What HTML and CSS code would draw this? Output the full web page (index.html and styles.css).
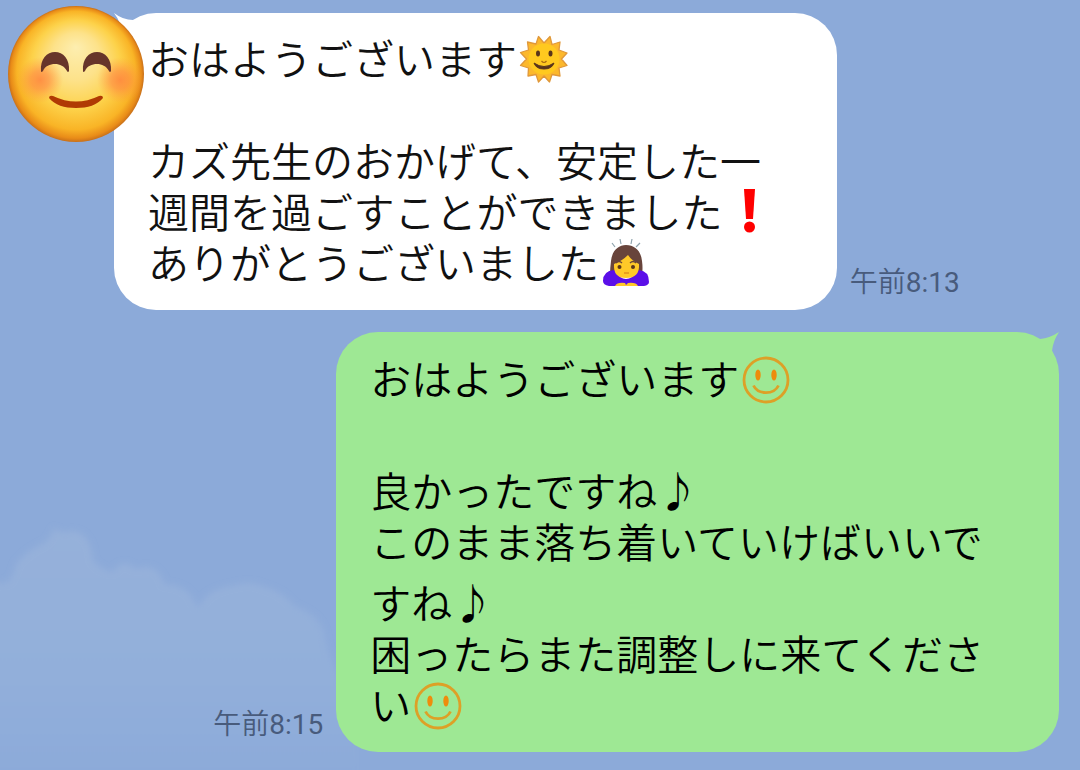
FILE: index.html
```html
<!DOCTYPE html>
<html lang="ja">
<head>
<meta charset="utf-8">
<meta name="viewport" content="width=device-width, initial-scale=1">
<title>トーク</title>
<link rel="stylesheet" href="styles.css">
</head>
<body>
<svg class="clouds" viewBox="0 0 360 250" aria-hidden="true">
  <defs>
    <linearGradient id="haze" x1="0" y1="0" x2="0" y2="1">
      <stop offset="0" stop-color="#96b1da"/>
      <stop offset="0.6" stop-color="#92afda"/>
      <stop offset="1" stop-color="#8caad9"/>
    </linearGradient>
    <filter id="soft" x="-5%" y="-5%" width="110%" height="110%"><feGaussianBlur stdDeviation="3"/></filter>
  </defs>
  <path filter="url(#soft)" fill="url(#haze)" d="M-20 64 L8 62 Q14 54 16 44 Q26 32 38 26 Q50 22 54 8 Q60 14 72 11 Q86 12 91 28 L93 40 Q98 48 112 52 L118 46 Q126 40 134 48 L150 47 Q162 52 164 64 Q180 64 190 74 L198 88 Q206 70 230 66 Q250 60 262 66 Q284 72 294 86 Q318 94 324 112 Q330 150 360 190 V260 H-20Z"/>
</svg>
<main class="chat">
  <article class="message message--received">
    <svg class="avatar" viewBox="0 0 136 136" role="img" aria-label="プロフィール画像">
      <defs>
        <radialGradient id="face" cx="0.5" cy="0.5" r="0.5" fx="0.5" fy="0.3">
          <stop offset="0" stop-color="#fdeeb0"/>
          <stop offset="0.35" stop-color="#fde28a"/>
          <stop offset="0.65" stop-color="#fdd24a"/>
          <stop offset="0.87" stop-color="#f9b426"/>
          <stop offset="0.96" stop-color="#e98c18"/>
          <stop offset="1" stop-color="#c8701a"/>
        </radialGradient>
        <radialGradient id="blush">
          <stop offset="0" stop-color="#ff7f3f" stop-opacity="0.8"/>
          <stop offset="0.4" stop-color="#ff8442" stop-opacity="0.6"/>
          <stop offset="1" stop-color="#ff9a40" stop-opacity="0"/>
        </radialGradient>
      </defs>
      <circle cx="68" cy="68" r="68" fill="url(#face)"/>
      <circle cx="32" cy="74" r="23" fill="url(#blush)"/>
      <circle cx="112" cy="74" r="23" fill="url(#blush)"/>
      <path fill="#67352a" d="M33 65C32 53 39 46 47 46C55 46 62 53 61 65Q60 67 59 65C56 60 52 58 47 58C42 58 37 60 35 65Q33 67 33 65Z"/>
      <path fill="#67352a" d="M75 65C74 53 81 46 89 46C97 46 104 53 103 65Q102 67 101 65C98 60 94 58 89 58C84 58 79 60 77 65Q75 67 75 65Z"/>
      <path fill="#b03a04" d="M41 92Q41 89 45 90Q68 101 91 90Q95 89 95 92C89 99 80 102 68 102C56 102 47 99 41 92Z"/>
    </svg>
    <div class="bubble bubble--white">
      <svg class="tail tail--left" viewBox="0 0 22 22" aria-hidden="true"><path d="M0 0Q9 7 19 7L19 19H7Q7 9 0 0Z"/></svg>
      <p class="line">おはようございます<svg class="emoji" viewBox="0 0 50 50" role="img" aria-label="太陽"><path fill="#fcb82c" stroke="#e0983a" stroke-width="1.3" stroke-linejoin="round" d="M19.500 1.500 25 8 31 1.500 33 9.500 41 7 40 15 48 18 42.500 24 48 30.500 40 33 41 41 33 39.500 30.500 47 25 41 19.500 47 17 39.500 9 41 9.500 33 1.500 30.500 7.500 24 1.500 17.500 9.500 15 8.500 7 17 9Z"/><circle cx="25" cy="24" r="15.500" fill="#ffc91f"/><ellipse cx="19" cy="18.500" rx="2" ry="3" fill="#59351b"/><ellipse cx="31.500" cy="18.500" rx="2" ry="3" fill="#59351b"/><path d="M22.500 26Q25 29 27.500 26" fill="none" stroke="#a96813" stroke-width="1.200"/><path d="M15 28Q25 35 35 28Q33 34 25 34Q17 34 15 28Z" fill="#59351b" stroke="#59351b"/></svg></p>
      <p class="line"><br></p>
      <p class="line">カズ先生のおかげて、安定した一</p>
      <p class="line">週間を過ごすことができました<svg class="emoji" viewBox="0 0 50 50" role="img" aria-label="びっくりマーク"><path fill="#f00" d="M20 1H31L29 31H22Z"/><circle cx="25.500" cy="39" r="5.500" fill="#f00"/></svg></p>
      <p class="line">ありがとうございました<svg class="emoji" viewBox="0 0 50 50" role="img" aria-label="おじぎ"><path fill="none" stroke="#8fa3ad" stroke-width="1.2" d="M11 4 14 8M19 0 20 5M31 0 30 5M39 4 35 8"/><path fill="#68443b" d="M9 37Q9 29 10 22C11 12 17 6 25 6C34 6 40 12 41 22Q42 29 41 37Z"/><path fill="#5b0fe8" d="M2 42Q2 32 13 31Q19 40 25 40Q31 40 38 31Q48 32 48 43Q48 46 43 47H8Q2 46 2 42Z"/><path fill="#ffc928" d="M13 25Q21 22 27 16Q31 22 38 25Q39 39 25 39Q12 39 13 25Z"/><path fill="none" stroke="#68443b" stroke-width="1.3" d="M15 24Q18 21 21 24M29 24Q32 21 35 24"/><circle cx="18.500" cy="28" r="2" fill="#59351b"/><circle cx="32" cy="28" r="2" fill="#59351b"/><path d="M23 34H28" stroke="#e0921c" stroke-width="1.500"/><path fill="#ffc928" d="M14 47Q16 43 24 44L25 46 27 44Q35 43 37 47Z"/></svg></p>
    </div>
    <time class="time" datetime="08:13">午前<span class="digits">8:13</span></time>
  </article>
  <article class="message message--sent">
    <time class="time" datetime="08:15">午前<span class="digits">8:15</span></time>
    <div class="bubble bubble--green">
      <svg class="tail tail--right" viewBox="0 0 22 22" aria-hidden="true"><path d="M22 0Q13 6 3 7V19H15Q16 9 22 0Z"/></svg>
      <p class="line">おはようございます<svg class="emoji" viewBox="0 0 50 50" role="img" aria-label="笑顔"><circle cx="25" cy="25" r="22" fill="none" stroke="#dda027" stroke-width="2.8"/><ellipse cx="17" cy="20" rx="2.7" ry="5.5" fill="#ee8c0c"/><ellipse cx="33" cy="20" rx="2.7" ry="5.5" fill="#ee8c0c"/><path d="M12.500 30.500C17 40 33 40 37.500 30.500" fill="none" stroke="#dda027" stroke-width="2.8"/></svg></p>
      <p class="line"><br></p>
      <p class="line line--note">良かったですね<span class="note">♪</span></p>
      <p class="line">このまま落ち着いていけばいいで</p>
      <p class="line line--note">すね<span class="note">♪</span></p>
      <p class="line">困ったらまた調整しに来てくださ</p>
      <p class="line">い<svg class="emoji" viewBox="0 0 50 50" role="img" aria-label="笑顔"><circle cx="25" cy="25" r="22" fill="none" stroke="#dda027" stroke-width="2.8"/><ellipse cx="17" cy="20" rx="2.7" ry="5.5" fill="#ee8c0c"/><ellipse cx="33" cy="20" rx="2.7" ry="5.5" fill="#ee8c0c"/><path d="M12.500 30.500C17 40 33 40 37.500 30.500" fill="none" stroke="#dda027" stroke-width="2.8"/></svg></p>
    </div>
  </article>
</main>
</body>
</html>
```
FILE: styles.css
```css
* {
  box-sizing: border-box;
}

body {
  margin: 0;
  min-height: 100vh;
  position: relative;
  background: #8caad9;
  color: #111;
  font-family: "Noto Sans CJK JP", sans-serif;
}

.clouds {
  position: absolute;
  left: 0;
  bottom: 0;
  width: 360px;
  height: 250px;
}

.chat {
  position: relative;
  display: flex;
  flex-direction: column;
  gap: 22px;
  padding: 13px 21px 18px 114px;
}

.message {
  position: relative;
  display: flex;
  align-items: flex-end;
  gap: 13px;
}

.message--received {
  margin-right: -21px;
}

.message--sent {
  margin-left: -114px;
  justify-content: flex-end;
}

.avatar {
  position: absolute;
  z-index: 1;
  left: -106px;
  top: -7px;
  width: 136px;
  height: 136px;
}

.bubble {
  position: relative;
  flex: none;
  width: calc(66vw + 10px);
  border-radius: 42px;
  padding: 19px 34px 23px;
}

.bubble--white {
  background: #fff;
  color: #111;
  fill: #fff;
}

.bubble--green {
  background: #9ee894;
  color: #000;
  fill: #9ee894;
  padding: 20px 34px 23px;
}

.tail {
  position: absolute;
  top: 0;
  width: 22px;
  height: 22px;
}

.tail--left {
  left: 0;
}

.tail--right {
  right: 0;
}

.line {
  display: flex;
  align-items: center;
  margin: 0;
  font-size: 41px;
  font-weight: 350;
  line-height: 51px;
  white-space: nowrap;
}

.line--note {
  padding-top: 10px;
}

.note {
  font-weight: 100;
}

.emoji {
  flex: none;
  width: 50px;
  height: 50px;
  margin: 0 0 -4px 2px;
}

.time {
  flex: none;
  padding-bottom: 7px;
  color: #485b7c;
  font-family: Roboto, "Noto Sans CJK JP", sans-serif;
  font-size: 28px;
  font-weight: 350;
  line-height: 40px;
}

.digits {
  font-weight: 400;
}
```
